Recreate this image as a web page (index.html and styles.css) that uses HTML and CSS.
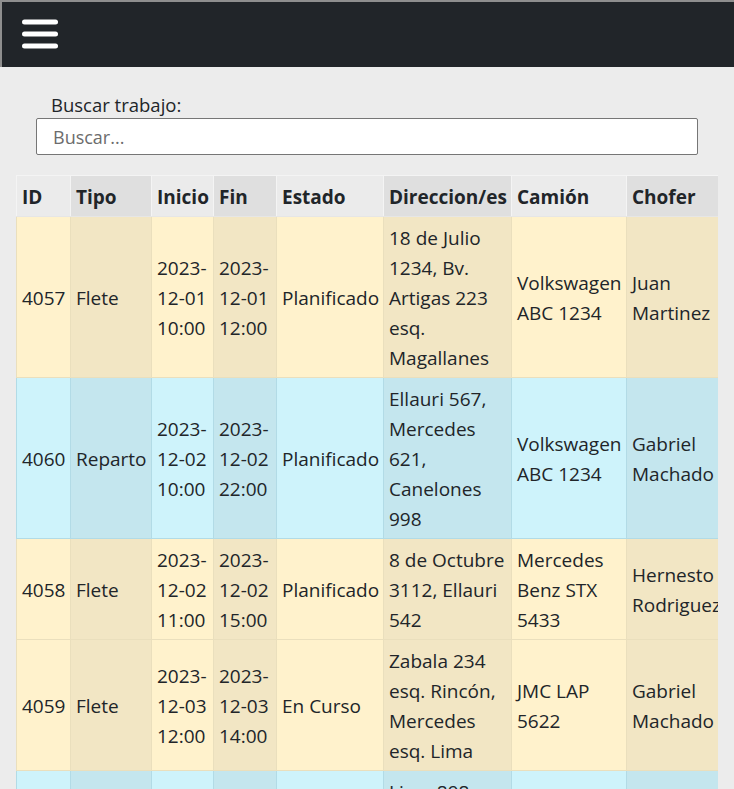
FILE: index.html
```html
<!DOCTYPE html>
<html lang="es">
<head>
<meta charset="utf-8">
<title>Trabajos</title>
<link rel="stylesheet" href="styles.css">
</head>
<body>
<nav class="topbar">
  <button class="menu-btn" aria-label="Menú">
    <svg width="36" height="30" viewBox="0 0 36 30">
      <rect x="0" y="0.5" width="36" height="5" rx="2.5" fill="#fff"/>
      <rect x="0" y="12.5" width="36" height="5" rx="2.5" fill="#fff"/>
      <rect x="0" y="24.5" width="36" height="5" rx="2.5" fill="#fff"/>
    </svg>
  </button>
</nav>
<main class="content">
  <div class="search">
    <label class="search-label" for="q">Buscar trabajo:</label>
    <input id="q" class="search-input" type="text" placeholder="Buscar...">
  </div>
  <div class="table-wrap">
    <table class="jobs">
      <colgroup>
        <col class="c-id"><col class="c-tipo"><col class="c-ini"><col class="c-fin"><col class="c-est"><col class="c-dir"><col class="c-cam"><col class="c-cho">
      </colgroup>
      <thead>
        <tr><th>ID</th><th>Tipo</th><th>Inicio</th><th>Fin</th><th>Estado</th><th>Direccion/es</th><th>Camión</th><th>Chofer</th></tr>
      </thead>
      <tbody>
        <tr class="row-flete">
          <td>4057</td><td>Flete</td><td>2023-<wbr>12-01 10:00</td><td>2023-<wbr>12-01 12:00</td><td>Planificado</td>
          <td>18 de Julio 1234, Bv. Artigas 223 esq. Magallanes</td><td>Volkswagen ABC 1234</td><td>Juan Martinez</td>
        </tr>
        <tr class="row-reparto">
          <td>4060</td><td>Reparto</td><td>2023-<wbr>12-02 10:00</td><td>2023-<wbr>12-02 22:00</td><td>Planificado</td>
          <td>Ellauri 567, Mercedes 621, Canelones 998</td><td>Volkswagen ABC 1234</td><td>Gabriel Machado</td>
        </tr>
        <tr class="row-flete">
          <td>4058</td><td>Flete</td><td>2023-<wbr>12-02 11:00</td><td>2023-<wbr>12-02 15:00</td><td>Planificado</td>
          <td>8 de Octubre 3112, Ellauri 542</td><td>Mercedes Benz STX 5433</td><td>Hernesto Rodriguez</td>
        </tr>
        <tr class="row-flete">
          <td>4059</td><td>Flete</td><td>2023-<wbr>12-03 12:00</td><td>2023-<wbr>12-03 14:00</td><td>En Curso</td>
          <td>Zabala 234 esq. Rincón, Mercedes esq. Lima</td><td>JMC LAP 5622</td><td>Gabriel Machado</td>
        </tr>
        <tr class="row-reparto">
          <td>4061</td><td>Reparto</td><td>2023-<wbr>12-04 09:00</td><td>2023-<wbr>12-04 18:00</td><td>Planificado</td>
          <td>Lima 898, Rivera 1450, Colonia 765 esq. Paraguay</td><td>Volkswagen ABC 1234</td><td>Juan Martinez</td>
        </tr>
      </tbody>
    </table>
  </div>
</main>
</body>
</html>
```

FILE: styles.css
```css
html, body {
  margin: 0;
  padding: 0;
}

body {
  background: #ececec;
  color: #212529;
  font-family: "Segoe UI", "Open Sans", "Noto Sans", sans-serif;
}

.topbar {
  height: 65px;
  background: #212529;
  border-top: 2px solid #8e8e8e;
  border-left: 2px solid #8e8e8e;
  display: flex;
  align-items: center;
  padding-left: 20px;
}

.menu-btn {
  background: none;
  border: 0;
  padding: 0;
  margin: -2px 0 0 0;
  display: flex;
  cursor: pointer;
}

.content {
  padding: 0 16px;
}

.search {
  margin: 24px 20px 0;
}

.search-label {
  display: block;
  padding-left: 15px;
  font-size: 18.5px;
  line-height: 27px;
}

.search-input {
  display: block;
  box-sizing: border-box;
  width: 100%;
  height: 37px;
  margin: 0;
  padding: 0 16px;
  border: 1px solid #767676;
  border-radius: 2px;
  background: #fff;
  font-family: inherit;
  font-size: 18px;
  color: #212529;
}

.search-input::placeholder {
  color: #6c6c6c;
}

.table-wrap {
  margin-top: 20px;
  overflow-x: auto;
}

.jobs {
  border-collapse: collapse;
  table-layout: fixed;
  width: 712px;
  font-size: 19px;
  line-height: 30px;
}

.c-id { width: 54px; }
.c-tipo { width: 81px; }
.c-ini { width: 62px; }
.c-fin { width: 63px; }
.c-est { width: 107px; }
.c-dir { width: 128px; }
.c-cam { width: 115px; }
.c-cho { width: 102px; }

.jobs th,
.jobs td {
  padding: 6px 5px 4px;
  text-align: left;
  vertical-align: middle;
  border: 1px solid;
}

.jobs th {
  font-weight: 700;
  white-space: nowrap;
  background: #ebebeb;
  border-color: #f4f4f4;
  border-bottom-color: #e6e6e6;
}

.jobs th:nth-child(even) {
  background: #dfdfdf;
}

.row-flete td {
  background: #fff2cc;
  border-color: #eadfbd;
}

.row-flete td:nth-child(even) {
  background: #f2e6c4;
}

.row-reparto td {
  background: #cef3fb;
  border-color: #b2dbe6;
}

.row-reparto td:nth-child(even) {
  background: #c4e6ee;
}
```
